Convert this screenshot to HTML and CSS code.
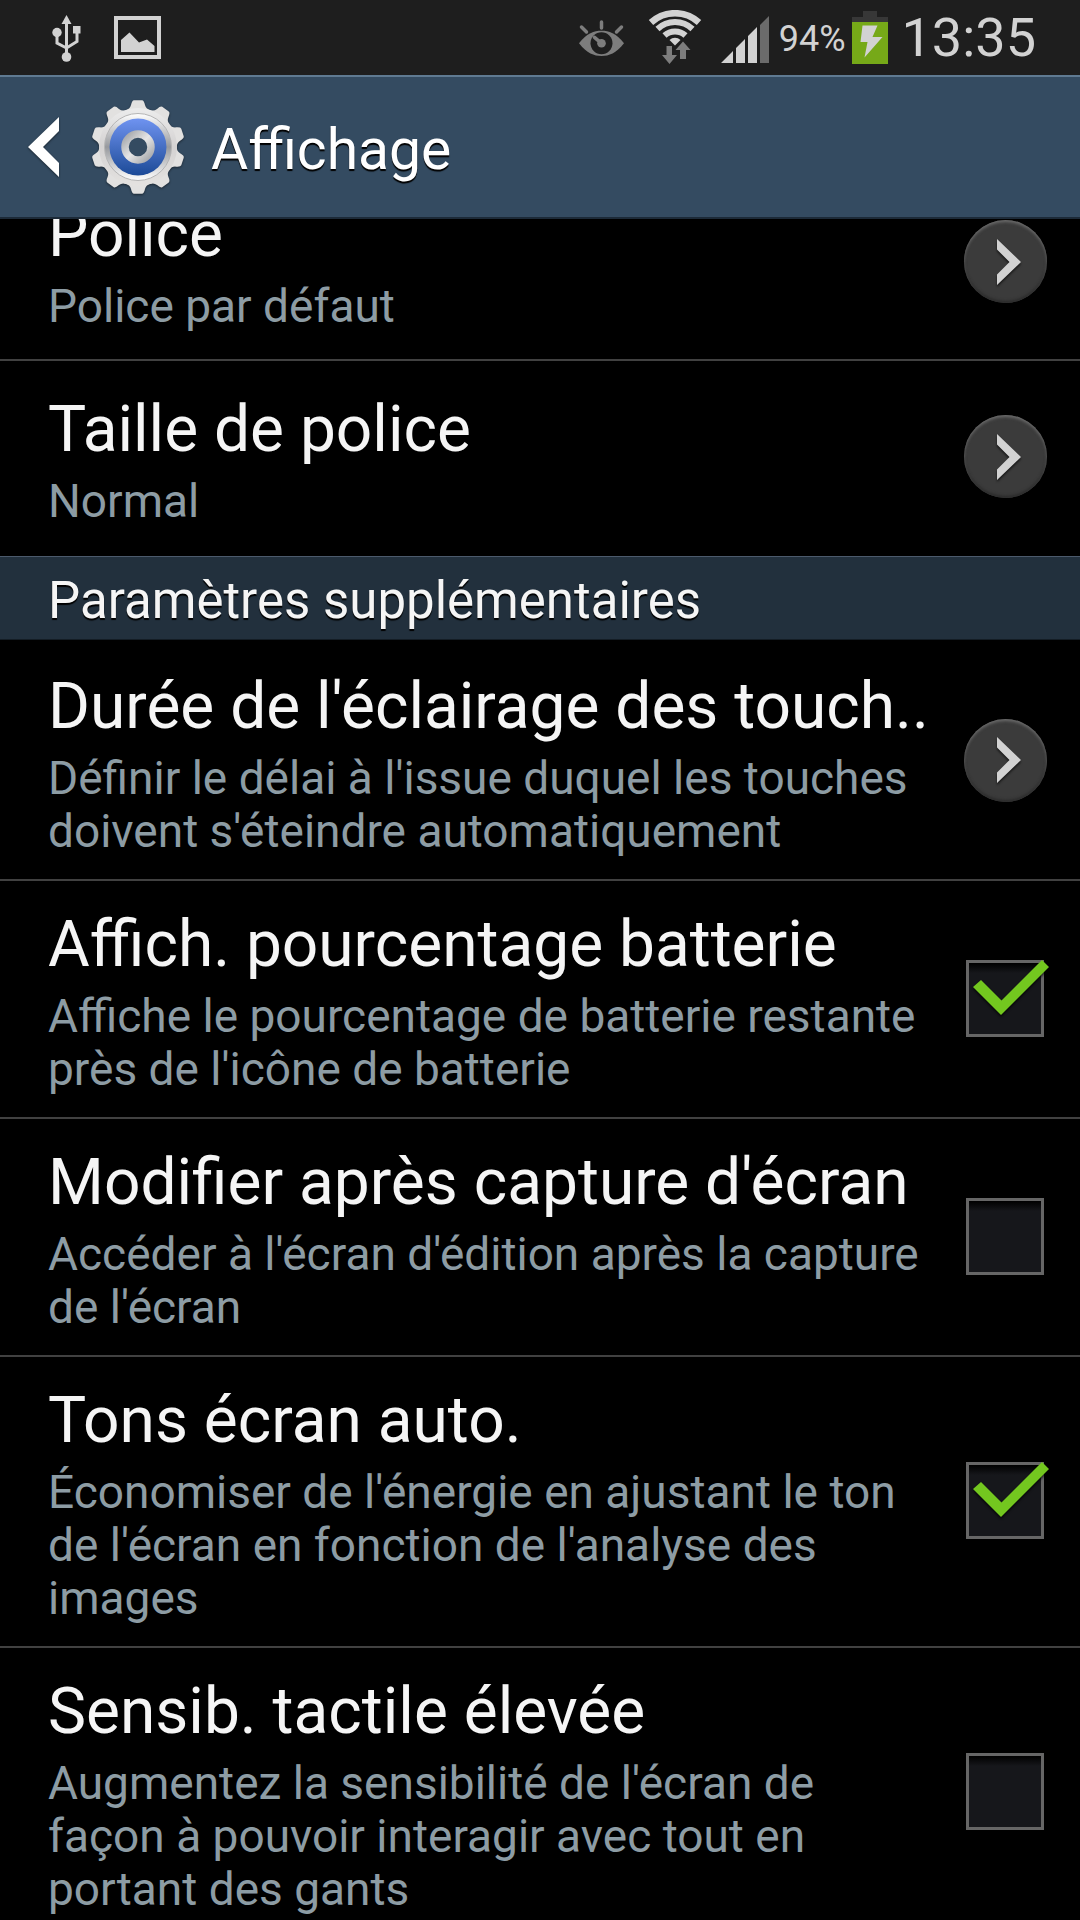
FILE: index.html
```
<!DOCTYPE html>
<html lang="fr">

<head>
    <meta charset="UTF-8" />
    <meta name="viewport" content="width=device-width, initial-scale=1.0" />
    <title>Affichage</title>
    <link rel="stylesheet" href="styles.css">
</head>

<body>
    <div class="status-bar">
        <div class="status-left">
            <svg class="icon-usb" viewBox="50 12 34 50" width="34" height="50" fill="#d2d2d2">
                <path d="M66.500 14l5 9h-10z" />
                <path d="M57 31v11l9.500 5M77 31v9.500l-10.500 6.500M66.500 22v34" fill="none" stroke="#d2d2d2" stroke-width="3" />
                <circle cx="57" cy="31.500" r="4.700" />
                <rect x="73" y="25" width="7.500" height="7.500" />
                <circle cx="66.500" cy="56" r="4.800" />
            </svg>
            <svg class="icon-image" viewBox="0 0 47 43" width="47" height="43">
                <rect x="2" y="2" width="43" height="39" fill="none" stroke="#d2d2d2" stroke-width="4" />
                <path d="M7 24l8.500-7.500L25 26.500l8-3L40.500 30v6H7z" fill="#d2d2d2" />
            </svg>
        </div>
        <div class="status-right">
            <svg class="icon-eye" viewBox="579 10 47 54" width="47" height="54">
                <path d="M580 42.300C588 32 595 29.700 602.500 29.700S617 32 625 42.300C617 52.500 610 55 602.500 55S588 52.500 580 42.300z" fill="#7d7d7d" />
                <circle cx="602.500" cy="42.300" r="11" fill="#1e1e1e" />
                <circle cx="602.500" cy="42.300" r="4.300" fill="#7d7d7d" />
                <path d="M602.500 42.300l-7-6M602.500 21v6M582.500 26l5 5M622.500 26l-5 5" stroke="#7d7d7d" stroke-width="3.500" stroke-linecap="round" />
            </svg>
            <svg class="icon-wifi" viewBox="649 9 54 55" width="54" height="55">
                <g fill="none" stroke="#d2d2d2">
                    <path d="M652 21.500a35.500 35.500 0 0 1 48 0" stroke-width="6.500" />
                    <path d="M658.500 28a25.500 25.500 0 0 1 35 0" stroke-width="6" />
                    <path d="M665.500 34.500a15.500 15.500 0 0 1 21 0" stroke-width="6" />
                </g>
                <path d="M670.500 39a8 8 0 0 1 11 0l-5.500 5.500z" fill="#d2d2d2" />
                <path d="M667.500 45h5.500v9h5l-7.500 9-7.500-9h4.500zM681 58h6v-9h4.500L684 40.500 676.500 49h4.500z" fill="#7d7d7d" />
            </svg>
            <svg class="icon-signal" viewBox="0 0 48 47" width="48" height="47" fill="#d2d2d2">
                <path d="M0 47l12-12v12zM15 47V32l9-9v24zM27 47V20l9-9v36z" />
                <path d="M39 47V9l9-9v47z" fill="#6b6b6b" />
            </svg>
            <span class="battery-level">94%</span>
            <svg class="icon-battery" viewBox="0 0 36 53" width="36" height="53">
                <path d="M11 0h14v6h11v5H0V6h11z" fill="#373737" />
                <rect y="11" width="36" height="42" fill="#76a918" />
                <path d="M10.500 14.500h15L20.500 26h10L12.500 46.500 15.500 31h-7z" fill="#d2d2d2" />
            </svg>
            <time class="clock">13:35</time>
        </div>
    </div>

    <header class="action-bar">
        <a class="back" href="#" aria-label="Retour">
            <svg class="icon-back" viewBox="0 0 32 60" width="32" height="60">
                <path d="M0 30L31 0v14L15 30l16 16v14z" fill="#fff" />
            </svg>
            <svg class="icon-gear" viewBox="-47 -47 94 94" width="94" height="94">
                <defs>
                    <linearGradient id="metal" x1="0" y1="0" x2="0" y2="1">
                        <stop offset="0" stop-color="#ececec" />
                        <stop offset=".5" stop-color="#d4d2d2" />
                        <stop offset="1" stop-color="#e4e2e0" />
                    </linearGradient>
                    <linearGradient id="ring" x1="0" y1="0" x2="0" y2="1">
                        <stop offset="0" stop-color="#fff" />
                        <stop offset=".5" stop-color="#97999d" />
                        <stop offset="1" stop-color="#fff" />
                    </linearGradient>
                    <linearGradient id="hub" x1="0" y1="0" x2="1" y2="1">
                        <stop offset="0" stop-color="#a2a4a8" />
                        <stop offset=".5" stop-color="#e6e6e6" />
                        <stop offset="1" stop-color="#a2a4a8" />
                    </linearGradient>
                    <linearGradient id="blue" x1="0" y1="0" x2="0" y2="1">
                        <stop offset="0" stop-color="#6f93f0" />
                        <stop offset="1" stop-color="#1c4a97" />
                    </linearGradient>
                    <path id="tooth" d="M-12-37Q-8-38-7-42Q-6-46.800-4-46.800H4Q6-46.800 7-42Q8-38 12-37L8-28H-8z" />
                </defs>
                <g fill="#e2e1e0">
                    <use href="#tooth" />
                    <use href="#tooth" transform="rotate(36)" />
                    <use href="#tooth" transform="rotate(72)" />
                    <use href="#tooth" transform="rotate(108)" />
                    <use href="#tooth" transform="rotate(144)" />
                    <use href="#tooth" transform="rotate(180)" />
                    <use href="#tooth" transform="rotate(216)" />
                    <use href="#tooth" transform="rotate(252)" />
                    <use href="#tooth" transform="rotate(288)" />
                    <use href="#tooth" transform="rotate(324)" />
                </g>
                <circle r="39" fill="url(#metal)" />
                <circle r="33.500" fill="url(#ring)" stroke="#b5b5b5" />
                <circle r="28.500" fill="url(#blue)" />
                <circle r="13" fill="#344b61" stroke="url(#hub)" stroke-width="7.500" />
            </svg>
        </a>
        <h1>Affichage</h1>
    </header>

    <main>
        <div class="list">
            <a class="row" href="#">
                <span class="text">
                    <span class="title">Police</span>
                    <span class="summary">Police par défaut</span>
                </span>
                <span class="more"><svg viewBox="0 0 24 46" width="24" height="46"><path d="M0 0l24 23L0 46V35.500L12.500 23 0 10.500z" /></svg></span>
            </a>
            <a class="row" href="#">
                <span class="text">
                    <span class="title">Taille de police</span>
                    <span class="summary">Normal</span>
                </span>
                <span class="more"><svg viewBox="0 0 24 46" width="24" height="46"><path d="M0 0l24 23L0 46V35.500L12.500 23 0 10.500z" /></svg></span>
            </a>
        </div>

        <h2>Paramètres supplémentaires</h2>

        <div class="list">
            <a class="row" href="#">
                <span class="text">
                    <span class="title">Durée de l'éclairage des touch..</span>
                    <span class="summary">Définir le délai à l'issue duquel les touches doivent s'éteindre automatiquement</span>
                </span>
                <span class="more"><svg viewBox="0 0 24 46" width="24" height="46"><path d="M0 0l24 23L0 46V35.500L12.500 23 0 10.500z" /></svg></span>
            </a>
            <label class="row">
                <span class="text">
                    <span class="title">Affich. pourcentage batterie</span>
                    <span class="summary">Affiche le pourcentage de batterie restante près de l'icône de batterie</span>
                </span>
                <span class="box">
                    <input type="checkbox" checked />
                    <svg class="tick" viewBox="0 0 84 78" width="84" height="78"><path d="M7 27l8-7 20.500 20.500L76 0l7 7-48 48z" /></svg>
                </span>
            </label>
            <label class="row">
                <span class="text">
                    <span class="title">Modifier après capture d'écran</span>
                    <span class="summary">Accéder à l'écran d'édition après la capture de l'écran</span>
                </span>
                <span class="box">
                    <input type="checkbox" />
                    <svg class="tick" viewBox="0 0 84 78" width="84" height="78"><path d="M7 27l8-7 20.500 20.500L76 0l7 7-48 48z" /></svg>
                </span>
            </label>
            <label class="row">
                <span class="text">
                    <span class="title">Tons écran auto.</span>
                    <span class="summary">Économiser de l'énergie en ajustant le ton de l'écran en fonction de l'analyse des images</span>
                </span>
                <span class="box">
                    <input type="checkbox" checked />
                    <svg class="tick" viewBox="0 0 84 78" width="84" height="78"><path d="M7 27l8-7 20.500 20.500L76 0l7 7-48 48z" /></svg>
                </span>
            </label>
            <label class="row">
                <span class="text">
                    <span class="title">Sensib. tactile élevée</span>
                    <span class="summary">Augmentez la sensibilité de l'écran de façon à pouvoir interagir avec tout en portant des gants</span>
                </span>
                <span class="box">
                    <input type="checkbox" />
                    <svg class="tick" viewBox="0 0 84 78" width="84" height="78"><path d="M7 27l8-7 20.500 20.500L76 0l7 7-48 48z" /></svg>
                </span>
            </label>
        </div>
    </main>
</body>

</html>
```
FILE: styles.css
```
* {
    box-sizing: border-box;
}

body {
    margin: 0;
    height: 100vh;
    display: flex;
    flex-direction: column;
    overflow: hidden;
    background-color: #000;
    color: #f5f5f5;
    font-family: Roboto, 'Noto Sans', sans-serif;
}

svg {
    display: block;
    flex: none;
}

a {
    color: inherit;
    text-decoration: none;
}

/* Status bar */
.status-bar {
    flex: none;
    display: flex;
    justify-content: space-between;
    height: 75px;
    padding: 0 44px 0 50px;
    background-color: #1e1e1e;
    color: #d2d2d2;
}

.status-left,
.status-right {
    display: flex;
    align-items: center;
}

.status-left {
    gap: 30px;
}

.icon-eye {
    margin-right: 23px;
}

.icon-wifi {
    margin-right: 19px;
}

.icon-signal {
    margin-top: 4px;
    margin-right: 10px;
}

.battery-level {
    margin-top: 3px;
    margin-right: 6px;
    font-size: 36px;
}

.clock {
    margin-left: 14px;
    font-size: 54px;
    line-height: 75px;
}

/* Action bar */
.action-bar {
    flex: none;
    display: flex;
    align-items: center;
    gap: 26px;
    height: 144px;
    padding: 0 28px;
    background-color: #344b61;
    border-top: 2px solid #5f7a92;
    border-bottom: 2px solid #1c2a38;
}

.back {
    display: flex;
    align-items: center;
    gap: 31px;
}

.icon-back,
.icon-gear {
    filter: drop-shadow(0 1px 1px rgba(0, 0, 0, 0.5));
}

h1 {
    margin: 0;
    padding-top: 5px;
    font-size: 57px;
    font-weight: 400;
    line-height: 74px;
    color: #fff;
    text-shadow: 0 2px 1px #000;
}

/* Settings list, scrolled so that the first row is partly hidden */
main {
    flex: 1;
    min-height: 0;
    overflow: hidden;
}

main .list:first-child {
    margin-top: -53px;
}

.row {
    display: flex;
    align-items: center;
    min-height: 195px;
    padding: 0 33px 0 48px;
    border-bottom: 2px solid #414141;
}

.list:first-child .row:last-child {
    border-bottom-color: #000;
}

.text {
    flex: 1;
    min-width: 0;
    padding: 27px 0 21px;
}

.title {
    display: block;
    margin-bottom: 8px;
    font-size: 64px;
    line-height: 74px;
    white-space: nowrap;
}

.summary {
    display: block;
    font-size: 46px;
    line-height: 53px;
    color: #8d9ca4;
}

h2 {
    margin: 0 0 3px;
    padding: 13px 48px 8px;
    font-size: 51px;
    font-weight: 400;
    line-height: 61px;
    background-color: #22303d;
    border-top: 1px solid #4c5a6c;
    border-bottom: 1px solid #141d25;
    text-shadow: 0 2px 1px #000;
}

.more {
    flex: none;
    display: flex;
    align-items: center;
    justify-content: center;
    width: 83px;
    height: 83px;
    margin: 0 0 2px 34px;
    border-radius: 50%;
    background-color: #3b3b3b;
    box-shadow: inset 0 2px 3px #6a6a6a, inset 0 -2px 3px #2a2a2a;
}

.more svg {
    margin-left: 6px;
    fill: #d2d2d2;
    filter: drop-shadow(0 2px 1px rgba(0, 0, 0, 0.6));
}

.box {
    position: relative;
    flex: none;
    width: 78px;
    height: 77px;
    margin: 0 3px 2px 36px;
}

.box input {
    appearance: none;
    display: block;
    width: 100%;
    height: 100%;
    margin: 0;
    border: 3px solid #666;
    background: linear-gradient(#000, #16171b 10px);
}

.tick {
    position: absolute;
    top: 0;
    left: 0;
    display: none;
    fill: #73c71f;
    filter: drop-shadow(0 2px 1px rgba(0, 0, 0, 0.7));
}

.box input:checked + .tick {
    display: block;
}
```
